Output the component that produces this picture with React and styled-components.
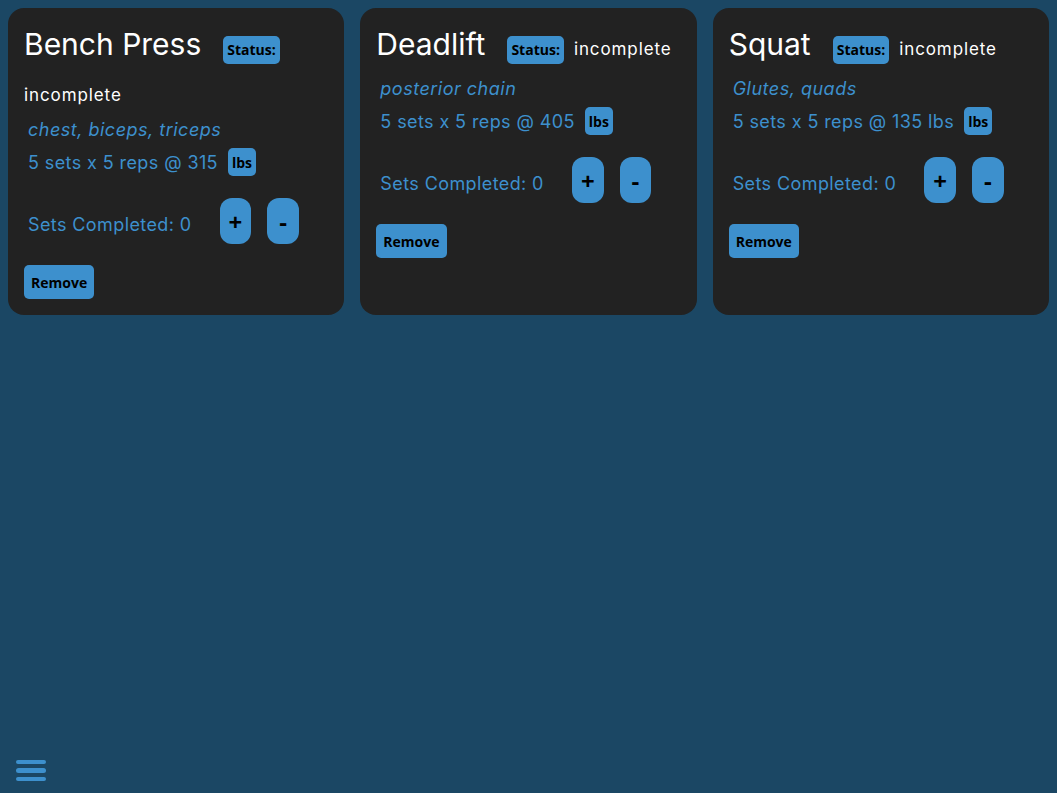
import styled, { createGlobalStyle } from "styled-components";

const GlobalStyle = createGlobalStyle`
  body {
    margin: 0;
    background-color: #1b4764;
    font-family: "Inter", "Liberation Sans", sans-serif;
  }
`;

const Page = styled.div`
  min-height: 100vh;
  padding: 8px;
  box-sizing: border-box;
`;

const Grid = styled.div`
  display: grid;
  grid-template-columns: repeat(3, 1fr);
  gap: 16px;
`;

const Card = styled.div`
  background-color: #222222;
  border-radius: 16px;
  padding: 16px;
  display: flex;
  flex-direction: column;
  align-items: flex-start;
`;

const Header = styled.div`
  display: flex;
  flex-wrap: wrap;
  align-items: baseline;
  row-gap: 21px;
`;

const Title = styled.h2`
  margin: 0 22px 0 0;
  font-size: 30px;
  font-weight: 400;
  line-height: 40px;
  color: #ffffff;
`;

const Pill = styled.button`
  border: none;
  background-color: #3d90cd;
  color: #000;
  font-family: "Open Sans", "Noto Sans", sans-serif;
  font-weight: 700;
  font-size: ${(props) => props.size || "14px"};
  border-radius: ${(props) => props.radius || "5px"};
  padding: ${(props) => props.pad || "0 4px"};
  margin-right: ${(props) => props.mr || "0"};
  height: ${(props) => props.h || "28px"};
  cursor: pointer;
`;

const Status = styled.span`
  font-size: 17px;
  letter-spacing: 0.9px;
  color: #ffffff;
`;

const Muscles = styled.p`
  margin: 11px 0 0 4px;
  font-size: 18px;
  letter-spacing: 0.5px;
  font-style: italic;
  color: #3d90cd;
  line-height: 28px;
`;

const Row = styled.div`
  display: flex;
  align-items: center;
  margin-top: ${(props) => props.mt || "0"};
  padding-left: ${(props) => (props.flush ? "0" : "4px")};
`;

const Info = styled.span`
  font-size: 18px;
  letter-spacing: 0.4px;
  color: #3d90cd;
  margin-right: ${(props) => props.mr || "10px"};
  margin-top: ${(props) => props.mt || "0"};
`;

const Counter = styled.div`
  display: flex;
  gap: 16px;
`;

const Menu = styled.button`
  position: fixed;
  left: 16px;
  bottom: 12px;
  background: none;
  border: none;
  padding: 0;
  display: flex;
  flex-direction: column;
  gap: 4px;
`;

const Bar = styled.span`
  display: block;
  width: 30px;
  height: 4.5px;
  border-radius: 3px;
  background-color: #3d90cd;
`;

const exercises = [
  { name: "Bench Press", muscles: "chest, biceps, triceps", weight: "315" },
  { name: "Deadlift", muscles: "posterior chain", weight: "405" },
  { name: "Squat", muscles: "Glutes, quads", weight: "135 lbs" },
];

const App = () => {
  return (
    <Page>
      <GlobalStyle />
      <Grid>
        {exercises.map((ex) => (
          <Card key={ex.name}>
            <Header>
              <Title>{ex.name}</Title>
              <Pill mr="10px">Status:</Pill>
              <Status>incomplete</Status>
            </Header>
            <Muscles>{ex.muscles}</Muscles>
            <Row mt="4px">
              <Info>5 sets x 5 reps @ {ex.weight}</Info>
              <Pill>lbs</Pill>
            </Row>
            <Row mt="22px">
              <Info mr="28px" mt="6px">
                Sets Completed: 0
              </Info>
              <Counter>
                <Pill size="24px" radius="12px" h="46px" pad="0 9px">
                  +
                </Pill>
                <Pill size="24px" radius="12px" h="46px" pad="0 12px">
                  -
                </Pill>
              </Counter>
            </Row>
            <Row mt="21px" flush>
              <Pill h="34px" pad="0 7px">
                Remove
              </Pill>
            </Row>
          </Card>
        ))}
      </Grid>
      <Menu aria-label="menu">
        <Bar />
        <Bar />
        <Bar />
      </Menu>
    </Page>
  );
};

export default App;
